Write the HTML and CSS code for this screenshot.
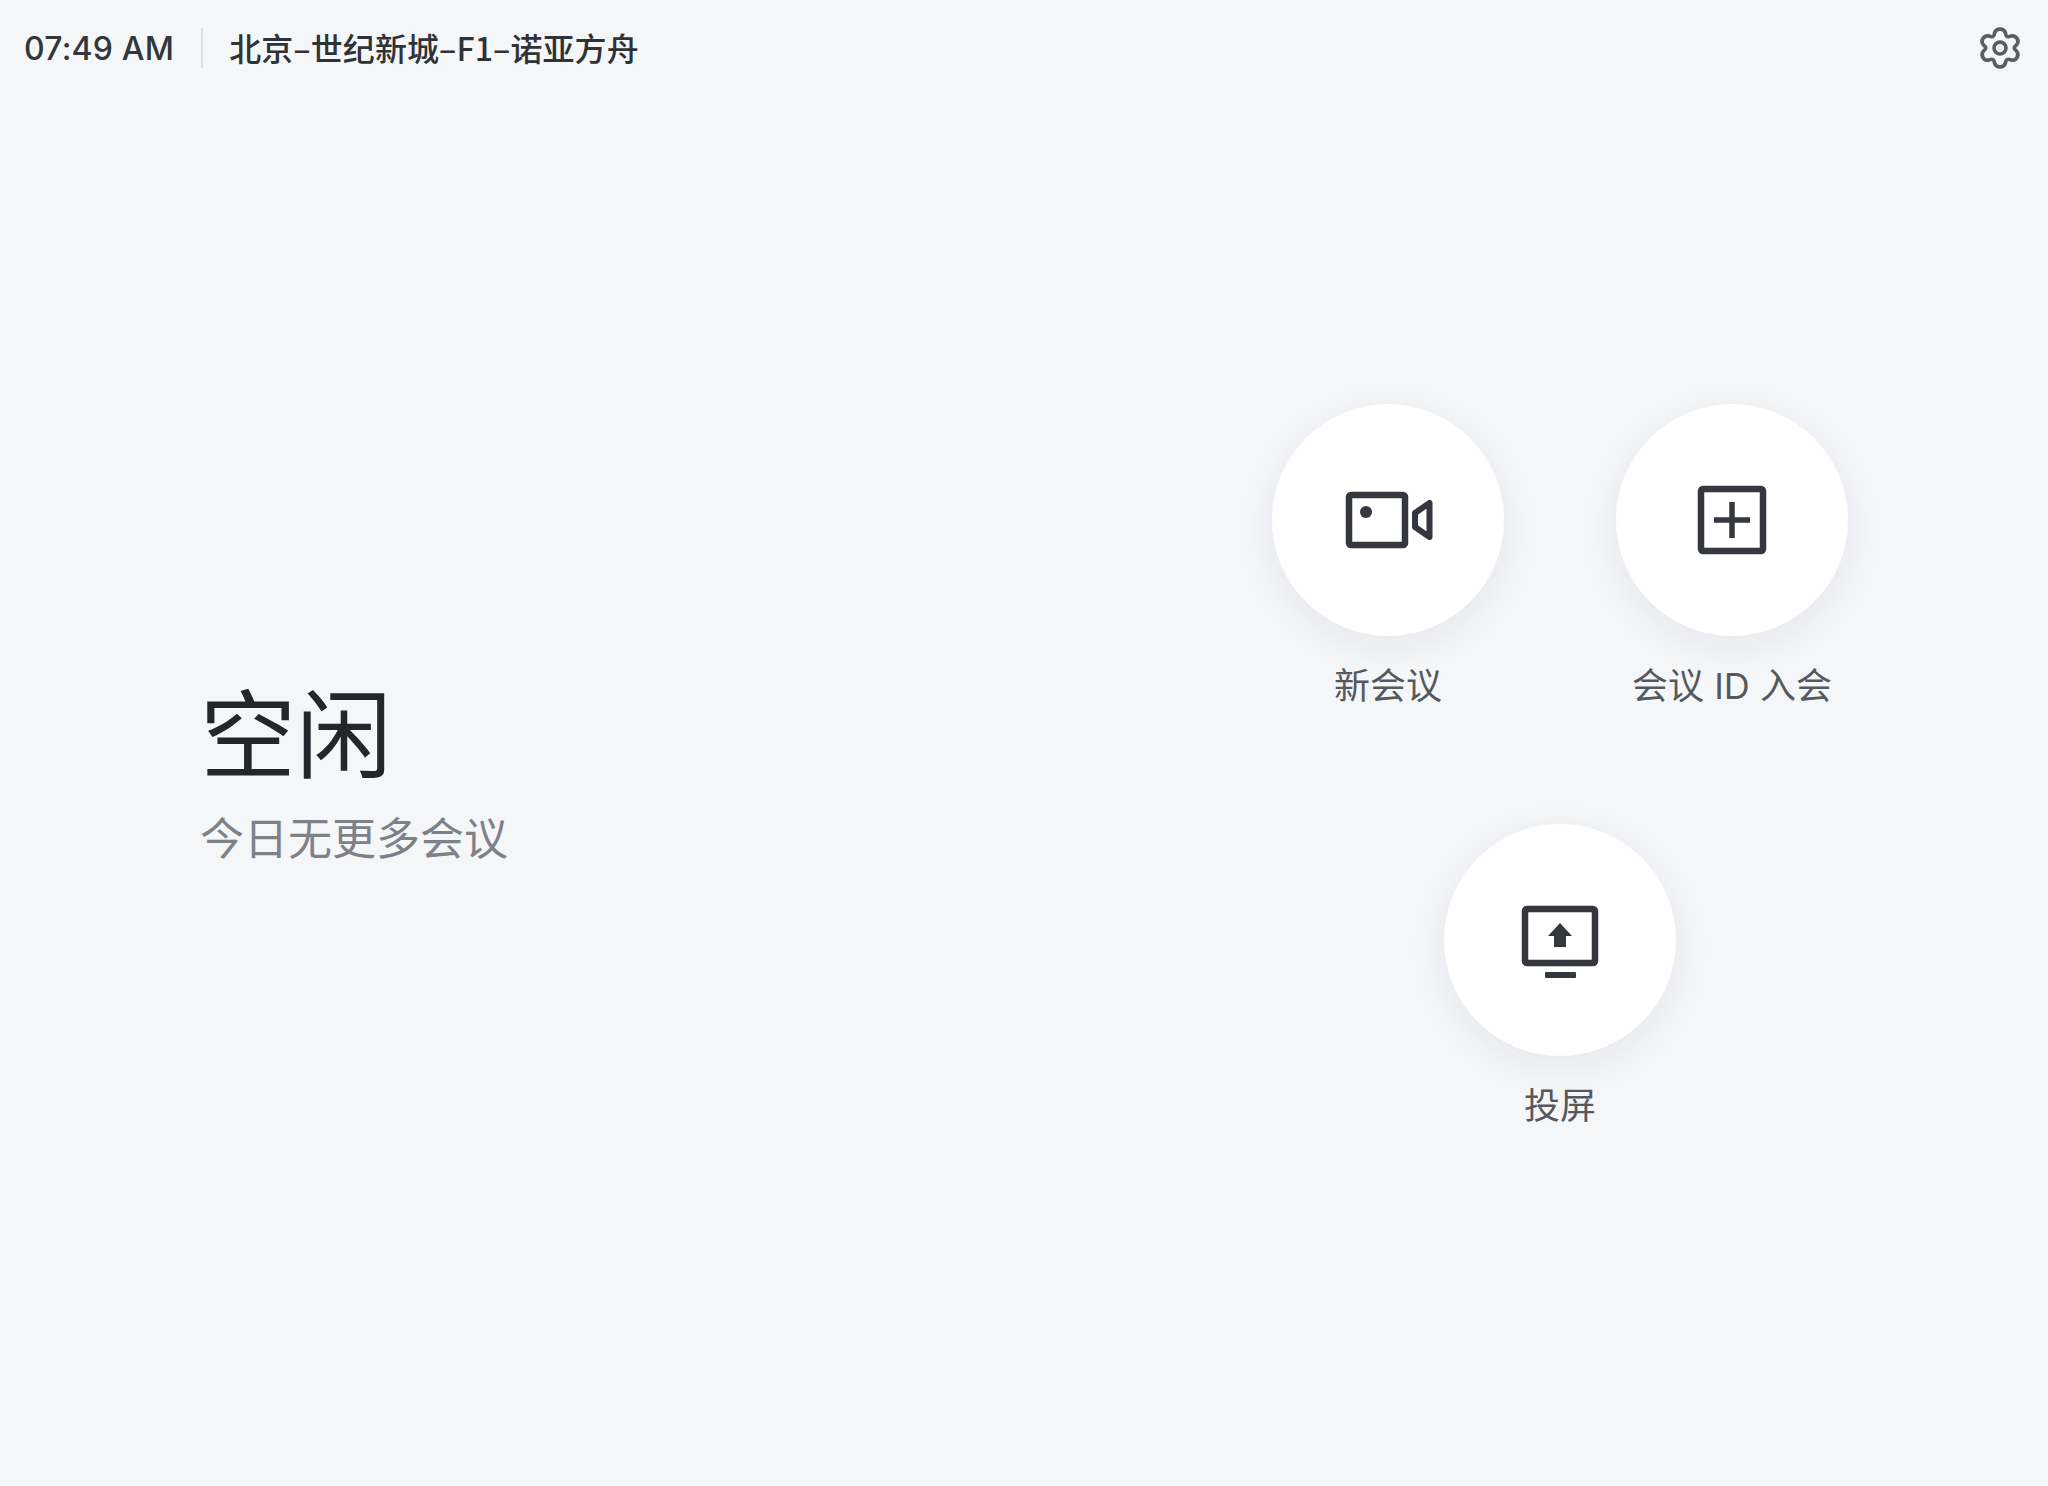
FILE: index.html
```html
<!DOCTYPE html>
<html lang="zh-CN">
<head>
<meta charset="utf-8">
<title>空闲</title>
<link rel="stylesheet" href="styles.css">
</head>
<body>
<div class="page">
  <header class="topbar">
    <span class="time">07:49 AM</span>
    <span class="divider"></span>
    <span class="room">北京–世纪新城–F1–诺亚方舟</span>
    <svg class="gear" viewBox="-24 -24 48 48" fill="none" stroke="#5a5d63" stroke-width="4" stroke-linejoin="round">
      <path d="M-5.900 -16.550A6.200 6 0 0 1 5.900 -16.550Q6.300 -10.400 12.100 -13.160A6.200 6 0 0 1 18 -3.390Q13.100 0 18 3.390A6.200 6 0 0 1 12.100 13.160Q6.300 10.400 5.900 16.550A6.200 6 0 0 1 -5.900 16.550Q-6.300 10.400 -12.100 13.160A6.200 6 0 0 1 -18 3.390Q-13.100 0 -18 -3.390A6.200 6 0 0 1 -12.100 -13.160Q-6.300 -10.400 -5.900 -16.550Z"/>
      <circle r="6.500"/>
    </svg>
  </header>
  <main class="main">
    <section class="status">
      <h1 class="title">空闲</h1>
      <p class="subtitle">今日无更多会议</p>
    </section>
    <section class="actions">
      <div class="action">
        <div class="circle">
          <svg class="icon" viewBox="0 0 100 100" fill="none" stroke="#34373d" stroke-linejoin="round">
            <rect x="11" y="25" width="56" height="50" rx="2" stroke-width="6.500"/>
            <circle cx="28" cy="42" r="6" fill="#34373d" stroke="none"/>
            <path d="M77 43L91.500 33V67L77 57Z" stroke-width="6"/>
          </svg>
        </div>
        <span class="label">新会议</span>
      </div>
      <div class="action">
        <div class="circle">
          <svg class="icon" viewBox="0 0 100 100" fill="none" stroke="#34373d">
            <rect x="19" y="19" width="62" height="62" rx="2" stroke-width="6.500" stroke-linejoin="round"/>
            <path d="M32 50H68M50 32V68" stroke-width="5.500"/>
          </svg>
        </div>
        <span class="label">会议 ID 入会</span>
      </div>
      <div class="action action-wide">
        <div class="circle">
          <svg class="icon" viewBox="0 0 100 100" fill="none" stroke="#34373d">
            <rect x="15" y="19" width="70" height="54" rx="2" stroke-width="6.500" stroke-linejoin="round"/>
            <path d="M50 33L62 46H56V57H44V46H38Z" fill="#34373d" stroke="none"/>
            <rect x="35" y="82" width="31" height="6" rx="1" fill="#34373d" stroke="none"/>
          </svg>
        </div>
        <span class="label">投屏</span>
      </div>
    </section>
  </main>
</div>
</body>
</html>
```
FILE: styles.css
```css
* { box-sizing: border-box; }
html, body { margin: 0; padding: 0; }
body {
  background: #f5f6f8;
  font-family: "Inter", "Noto Sans CJK SC", "Noto Sans", sans-serif;
  color: #2b2e33;
}
.page {
  width: 2048px;
  height: 1486px;
  overflow: hidden;
  display: flex;
  flex-direction: column;
}
.topbar {
  height: 96px;
  display: flex;
  align-items: center;
  padding: 0 26px 0 24px;
}
.time { font-size: 32px; line-height: 40px; letter-spacing: 0.2px; color: #33363b; font-weight: 500; padding-top: 2px; }
.divider { width: 2px; height: 40px; background: #dfe0e3; margin: 0 26px 0 27px; }
.room { font-size: 32px; line-height: 40px; letter-spacing: 0.1px; color: #2f3237; font-weight: 500; padding-bottom: 2px; font-family: "Noto Sans CJK SC", sans-serif; }
.gear { width: 44px; height: 44px; margin-left: auto; }
.main {
  flex: 1;
  display: flex;
  justify-content: space-between;
  padding: 0 200px;
}
.status { padding-top: 568px; }
.title {
  margin: 0;
  font-size: 96px;
  line-height: 130px;
  font-weight: 400;
  color: #24262b;
  font-family: "Noto Sans CJK SC", sans-serif;
}
.subtitle {
  margin: 12px 0 0;
  font-size: 44px;
  line-height: 60px;
  font-weight: 400;
  color: #7e8187;
  font-family: "Noto Sans CJK SC", sans-serif;
}
.actions {
  width: 576px;
  padding-top: 308px;
  display: grid;
  grid-template-columns: 232px 232px;
  column-gap: 112px;
  row-gap: 114px;
  align-content: start;
}
.action {
  display: flex;
  flex-direction: column;
  align-items: center;
  gap: 26px;
}
.action-wide { grid-column: 1 / -1; }
.circle {
  width: 232px;
  height: 232px;
  border-radius: 50%;
  background: #fff;
  box-shadow: 0 10px 40px rgba(30, 35, 50, 0.07);
  display: flex;
  align-items: center;
  justify-content: center;
}
.icon { width: 100px; height: 100px; display: block; }
.label {
  font-size: 36px;
  line-height: 48px;
  color: #55585e;
  white-space: nowrap;
  font-weight: 400;
}
```
